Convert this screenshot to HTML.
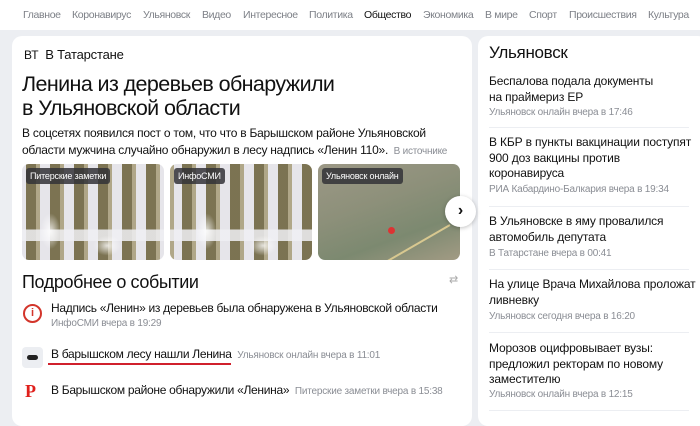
<!DOCTYPE html><html><head><meta charset="utf-8"><style>
*{margin:0;padding:0;box-sizing:border-box}
body{width:700px;height:413px;overflow:hidden;background:#eceef2;font-family:"Liberation Sans",sans-serif;color:#111;position:relative}
.nav{position:absolute;top:0;left:0;width:700px;height:30px;background:#fff;font-size:10.5px;letter-spacing:-0.35px;color:#7d8087;white-space:nowrap}
.nav span{position:absolute;top:9px}
.card{position:absolute;background:#fff;border-radius:10px}
.a{position:absolute;white-space:nowrap}
.img{position:absolute;top:164px;width:142px;height:96px;border-radius:7px;overflow:hidden}
.snow{background:
radial-gradient(ellipse 10px 18px at 20% 70%,rgba(255,255,255,.8),transparent),
radial-gradient(ellipse 14px 10px at 60% 85%,rgba(255,255,255,.8),transparent),
linear-gradient(180deg,transparent 0 68%,rgba(240,240,244,.85) 68% 80%,transparent 80%),
repeating-linear-gradient(90deg,rgba(0,0,0,0) 0 4px,rgba(105,95,55,.85) 4px 14px,rgba(140,125,70,.6) 14px 18px,rgba(0,0,0,0) 18px 24px),
#e6e5ea}
.lbl{position:absolute;left:4px;top:4px;background:rgba(50,50,55,.85);color:#fff;font-size:9px;letter-spacing:-0.2px;padding:3px 4px;border-radius:3px}
.rt{font-size:12px;letter-spacing:-0.15px;line-height:15.5px;color:#111;left:489px}
.mt{font-size:10px;letter-spacing:-0.2px;color:#8a8d94;left:489px}
.sep{position:absolute;left:489px;width:200px;height:1px;background:#eceef2}
.it{font-size:12px;letter-spacing:-0.3px;left:51px}
.mm{font-size:10px;letter-spacing:-0.2px;color:#8a8d94}
</style></head><body>
<div class="nav">
<span style="left:23px">Главное</span><span style="left:72px">Коронавирус</span><span style="left:143px">Ульяновск</span><span style="left:202px">Видео</span><span style="left:243px">Интересное</span><span style="left:309px">Политика</span><span style="left:364px;color:#111">Общество</span><span style="left:423px">Экономика</span><span style="left:485px">В мире</span><span style="left:529px">Спорт</span><span style="left:569px">Происшествия</span><span style="left:648px">Культура</span>
</div>
<div class="card" style="left:12px;top:36px;width:460px;height:390px"></div>
<div class="card" style="left:478px;top:36px;width:230px;height:390px"></div>
<div class="a" style="left:24px;top:47px;font-size:12px">ВТ&nbsp; <span style="font-size:13px;letter-spacing:-0.2px">В Татарстане</span></div>
<div class="a" style="left:22px;top:72px;font-size:21.5px;letter-spacing:-0.6px;line-height:24px;font-weight:500">Ленина из деревьев обнаружили<br>в Ульяновской области</div>
<div class="a" style="left:22px;top:125px;font-size:12px;letter-spacing:-0.25px;line-height:16.5px">В соцсетях появился пост о том, что что в Барышском районе Ульяновской<br>области мужчина случайно обнаружил в лесу надпись «Ленин 110». <span style="font-size:10px;color:#8a8d94">&nbsp;В источнике</span></div>
<div class="img snow" style="left:22px"><div class="lbl">Питерские заметки</div></div>
<div class="img snow" style="left:170px;background-position:8px 0"><div class="lbl">ИнфоСМИ</div></div>
<div class="img" style="left:318px;background:linear-gradient(160deg,#9c9886,#8d907a 40%,#7c8970 70%,#a29b84)"><div class="lbl">Ульяновск онлайн</div><div style="position:absolute;left:70px;top:63px;width:7px;height:7px;border-radius:50%;background:#d33"></div><div style="position:absolute;left:20px;top:90px;width:120px;height:2px;background:#d8c890;transform:rotate(-30deg)"></div></div>
<div class="a" style="left:445px;top:196px;width:31px;height:31px;border-radius:50%;background:#fff;box-shadow:0 1px 4px rgba(0,0,0,.25);text-align:center;line-height:30px;font-size:16px;font-weight:bold">›</div>
<div class="a" style="left:22px;top:272px;font-size:18px;letter-spacing:-0.4px;font-weight:500">Подробнее о событии</div>
<div class="a" style="left:449px;top:277px;color:#aaa;font-size:11px;line-height:6px">⇄</div>
<div class="a" style="left:23px;top:304px;width:19px;height:19px;border:2px solid #d3352b;border-radius:50%;color:#d3352b;font-size:11px;font-weight:bold;text-align:center;line-height:15px">i</div>
<div class="a it" style="top:301px">Надпись «Ленин» из деревьев была обнаружена в Ульяновской области</div>
<div class="a mm" style="left:51px;top:318px">ИнфоСМИ вчера в 19:29</div>
<div class="a" style="left:22px;top:347px;width:21px;height:21px;background:#eceef2;border-radius:4px"><div style="position:absolute;left:5px;top:8px;width:11px;height:5px;background:#222;border-radius:3px"></div></div>
<div class="a it" style="top:347px">В барышском лесу нашли Ленина <span class="mm">&nbsp;Ульяновск онлайн вчера в 11:01</span></div>
<div class="a" style="left:48px;top:363px;width:183px;height:2px;background:#d0202c"></div>
<div class="a" style="left:25px;top:381px;color:#e0201c;font-family:'Liberation Serif',serif;font-weight:bold;font-size:18px">Р</div>
<div class="a it" style="top:383px">В Барышском районе обнаружили «Ленина» <span class="mm">&nbsp;Питерские заметки вчера в 15:38</span></div>

<div class="a" style="left:489px;top:43px;font-size:17px;letter-spacing:-0.3px;font-weight:500">Ульяновск</div>
<div class="a rt" style="top:74px">Беспалова подала документы<br>на праймериз ЕР</div>
<div class="a mt" style="top:107px">Ульяновск онлайн вчера в 17:46</div>
<div class="sep" style="top:127px"></div>
<div class="a rt" style="top:135px">В КБР в пункты вакцинации поступят<br>900 доз вакцины против<br>коронавируса</div>
<div class="a mt" style="top:184px">РИА Кабардино-Балкария вчера в 19:34</div>
<div class="sep" style="top:206px"></div>
<div class="a rt" style="top:214px">В Ульяновске в яму провалился<br>автомобиль депутата</div>
<div class="a mt" style="top:248px">В Татарстане вчера в 00:41</div>
<div class="sep" style="top:269px"></div>
<div class="a rt" style="top:277px">На улице Врача Михайлова проложат<br>ливневку</div>
<div class="a mt" style="top:311px">Ульяновск сегодня вчера в 16:20</div>
<div class="sep" style="top:332px"></div>
<div class="a rt" style="top:341px">Морозов оцифровывает вузы:<br>предложил ректорам по новому<br>заместителю</div>
<div class="a mt" style="top:389px">Ульяновск онлайн вчера в 12:15</div>
<div class="sep" style="top:410px"></div>
</body></html>
